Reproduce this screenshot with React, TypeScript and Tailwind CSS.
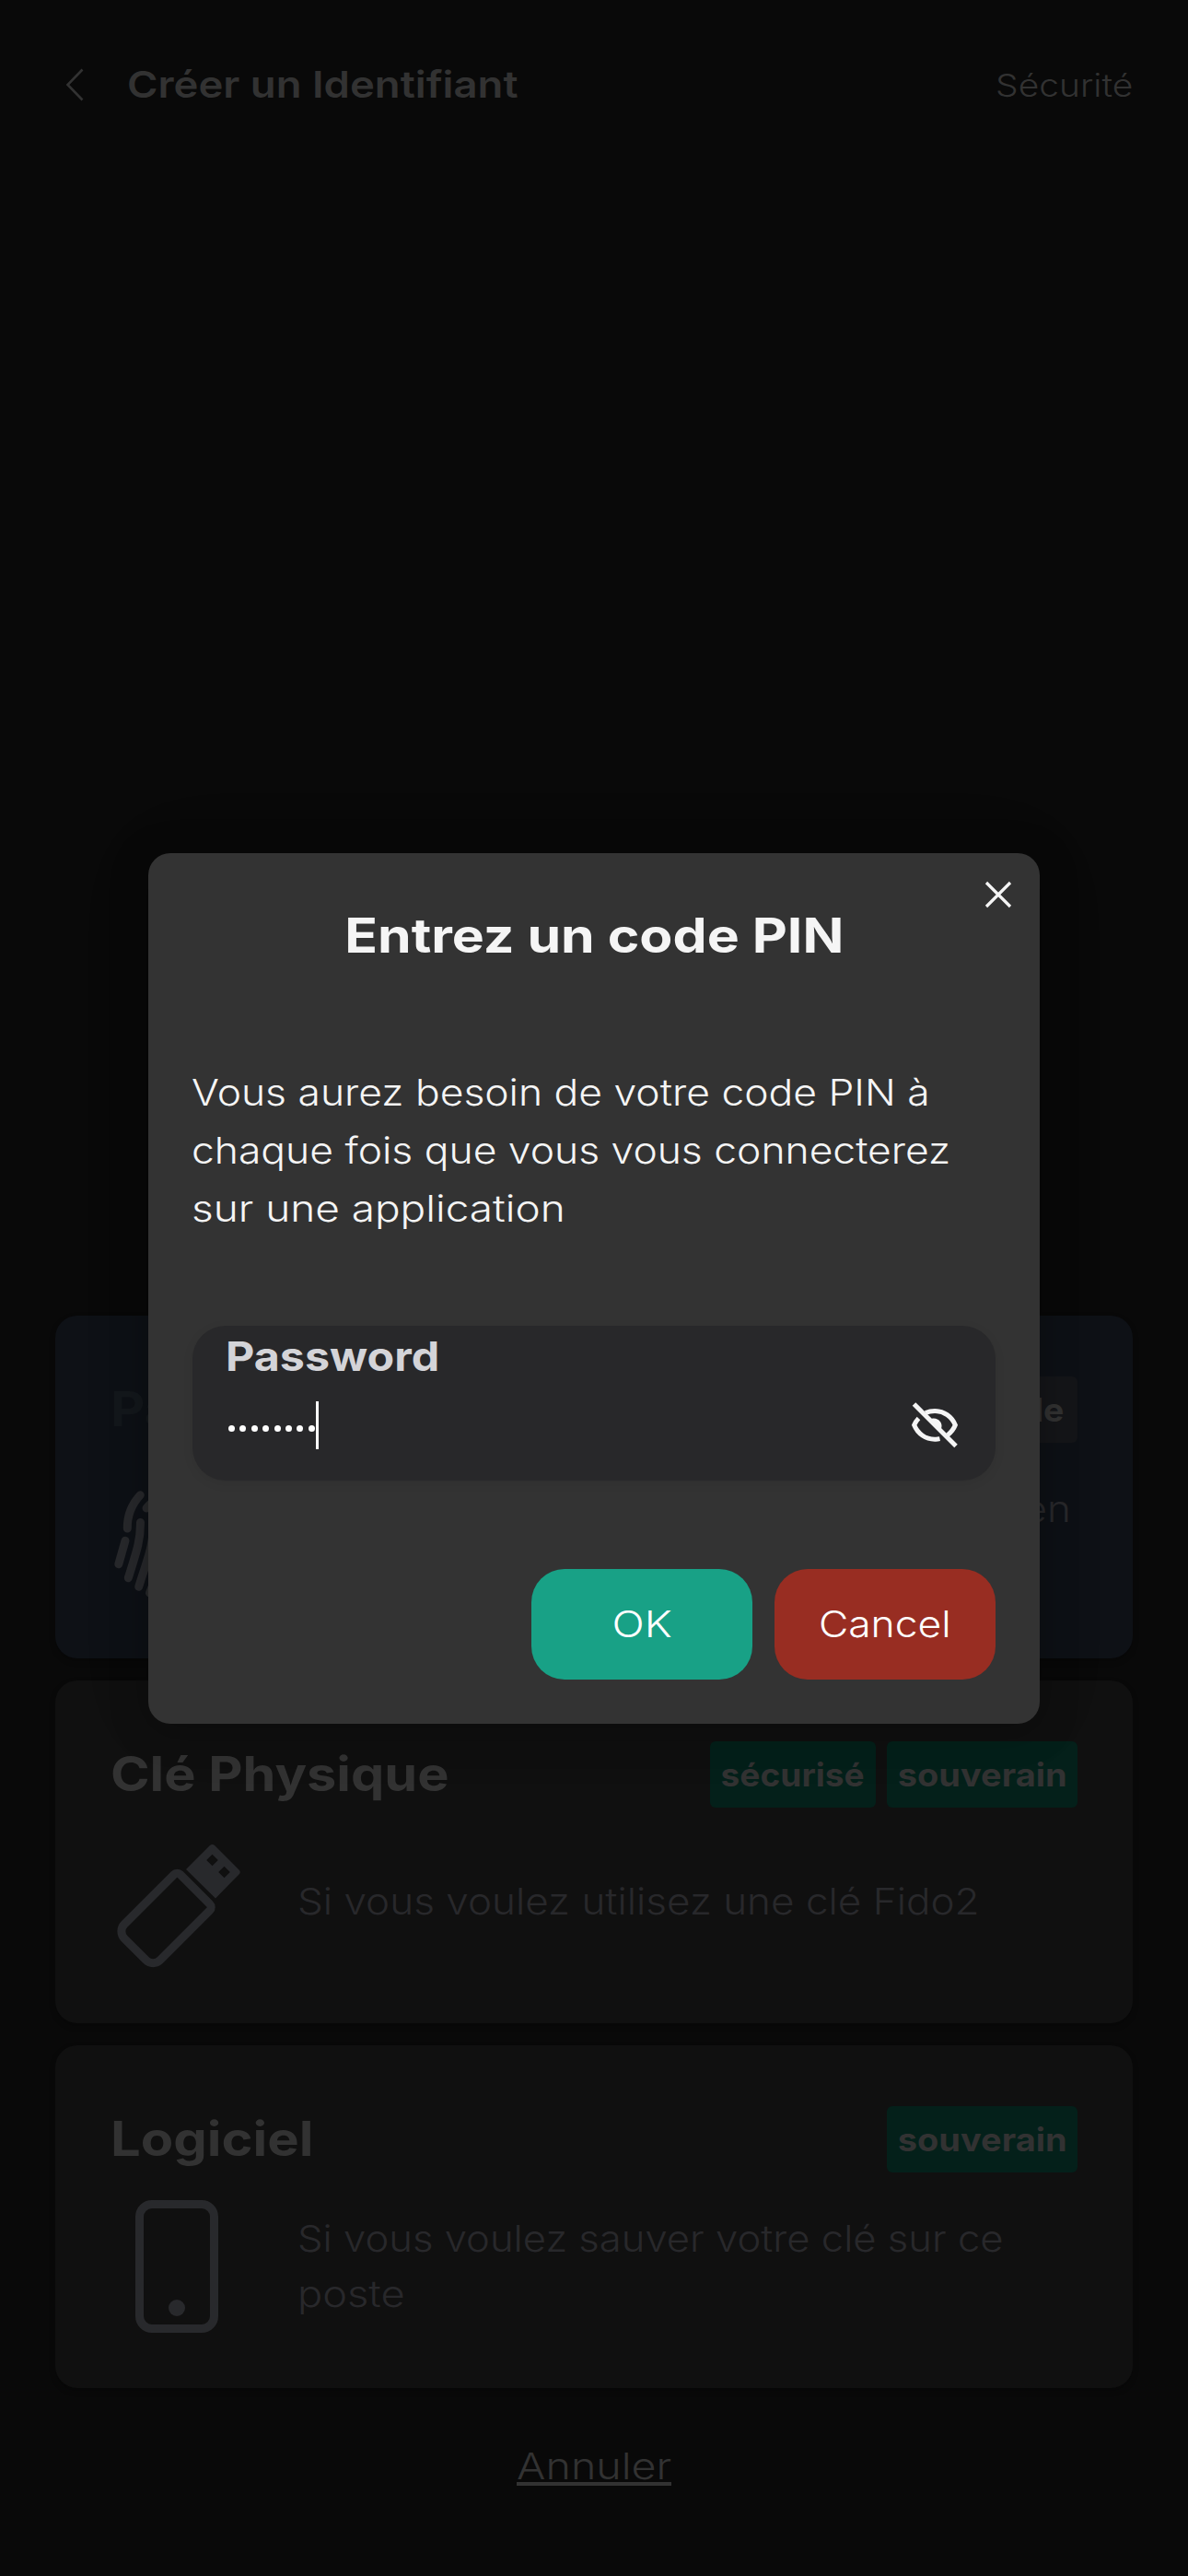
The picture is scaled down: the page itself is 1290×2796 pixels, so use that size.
import type { ReactNode } from 'react';

function ChevronIcon() {
  return (
    <svg className="h-9 w-[22px]" viewBox="0 0 22 36" fill="none" stroke="#323232" strokeWidth="2.6">
      <path d="M18.500 1.500 2.500 18l16 16.500" />
    </svg>
  );
}

function CloseIcon() {
  return (
    <svg className="h-[30px] w-[30px]" viewBox="0 0 30 30" stroke="#f5f5f5" strokeWidth="3.2">
      <path d="M2 2l26 26M28 2 2 28" />
    </svg>
  );
}

function EyeOffIcon() {
  return (
    <svg className="h-[54px] w-[54px]" viewBox="28 30 54 54" fill="none" stroke="#f5f5f5" strokeWidth="5">
      <path d="M45 43.6C48 42.2 51.4 41.5 55 41.5c10 0 18.500 6 22.300 15.300-1.600 4-4.200 7.600-8.300 10.800" />
      <path d="M37.500 49.500c-2.100 2.100-3.700 4.600-4.800 7.300C36.500 66.100 45 72.200 55 72.200c2 0 3.600-.2 5.500-.6" />
      <path d="M32.500 33.900 78 79.600" />
      <path d="M49 51.200c4-2.800 8.500-1.600 11.200 1 2.900 2.900 3 7.400.6 10.900z" fill="#f5f5f5" stroke="none" />
    </svg>
  );
}

function FingerprintIcon() {
  return (
    <svg className="h-36 w-36" viewBox="120 1596 144 144" fill="none" stroke="#28292c" strokeWidth="9" strokeLinecap="round">
      <path d="M152.300 1622.700Q138 1638 138.300 1659" />
      <path d="M136 1672.300 128.800 1697.700" />
      <path d="M152.500 1652.500C152.500 1672 149 1682 139.300 1712.700" />
      <path d="M159 1637C172 1620 198 1618 212 1634 222 1645 222 1664 218 1684" />
      <path d="M150.700 1722.300C158 1698 166 1680 166 1660 168 1630 202 1632 204 1660 204 1684 198 1706 190 1726" />
      <path d="M162.500 1729C172 1704 184 1682 185 1660" />
      <path d="M166 1610C190 1598 222 1606 234 1632" />
    </svg>
  );
}

function UsbKeyIcon() {
  return (
    <svg className="h-36 w-36" viewBox="119.5 1992 144 144">
      <g transform="rotate(45 179 2083)">
        <path
          d="M157 2037.300h44.500a5 5 0 0 1 5 5v76a11 11 0 0 1-11 11h-33a11 11 0 0 1-11-11v-76a5 5 0 0 1 5-5z"
          fill="none"
          stroke="#28292c"
          strokeWidth="9"
        />
      </g>
      <path
        fill="#28292c"
        fillRule="evenodd"
        d="M227.500 2003q2.500-2 5 0l26.500 26.500q2.500 2.500 0 5l-25.500 26-32-31.500zM230 2012.700l-6.300 6.300 6.300 6.300 6.300-6.300zM243 2025.700l-6.300 6.300 6.300 6.300 6.300-6.300z"
      />
    </svg>
  );
}

function PhoneIcon() {
  return (
    <svg className="h-36 w-36" viewBox="0 0 144 144">
      <rect x="31.500" y="4.500" width="81" height="135" rx="13.500" fill="none" stroke="#28292c" strokeWidth="9" />
      <circle cx="72" cy="117" r="9" fill="#28292c" />
    </svg>
  );
}

function Badge({ className, children }: { className: string; children: ReactNode }) {
  return (
    <span className={`flex h-[72px] items-center justify-center rounded-[6px] text-[35px] font-bold text-[#323232] ${className}`}>
      {children}
    </span>
  );
}

function Card({
  className,
  title,
  badges,
  icon,
  children,
}: {
  className: string;
  title: ReactNode;
  badges: ReactNode;
  icon: ReactNode;
  children: ReactNode;
}) {
  return (
    <section className={`h-[372px] rounded-[24px] px-[60px] pt-[66px] shadow-[0_3px_6px_rgba(0,0,0,0.25)] ${className}`}>
      <div className="flex h-[72px] items-center justify-between text-[52px] leading-[72px] font-bold">
        {title}
        <div className="flex gap-3">{badges}</div>
      </div>
      <div className="flex h-[204px] items-center gap-[60px]">
        {icon}
        <div className="-ml-px text-[40px] leading-[60px] font-light whitespace-nowrap text-[#28282b]">{children}</div>
      </div>
    </section>
  );
}

export default function App() {
  return (
    <div className="relative h-[2796px] w-[1290px] overflow-hidden bg-[#090909] font-['Inter',sans-serif]">
      <header className="flex h-[183px] items-center pr-[60px] pl-[71px] text-[#323232]">
        <ChevronIcon />
        <h1 className="ml-[45px] origin-left scale-x-[1.137] text-[40px] font-semibold">Créer un Identifiant</h1>
        <span className="mt-0.5 ml-auto origin-right scale-x-[1.145] text-[34px] font-light">Sécurité</span>
      </header>

      <main className="flex flex-col gap-6 px-[60px] pt-[1245px]">
        <Card
          className="bg-[#0e1116]"
          title={<h2 className="origin-left scale-x-[1.11] text-[#14181c]">Passkey</h2>}
          badges={
            <Badge className="w-[150px] bg-[#151619]">
              <span className="scale-x-[1.07]">simple</span>
            </Badge>
          }
          icon={<FingerprintIcon />}
        >
          <p className="w-[840px] origin-right scale-x-[1.1] text-right">Si vous voulez vous connecter en</p>
          <p className="origin-left scale-x-[1.1]">utilisant votre téléphone</p>
        </Card>
        <Card
          className="bg-[#101010]"
          title={<h2 className="origin-left scale-x-[1.108] text-[#323232]">Clé Physique</h2>}
          badges={
            <>
              <Badge className="w-[180px] bg-[#04201a]">
                <span className="scale-x-[1.06]">sécurisé</span>
              </Badge>
              <Badge className="w-[207px] bg-[#04201a]">
                <span className="scale-x-[1.085]">souverain</span>
              </Badge>
            </>
          }
          icon={<UsbKeyIcon />}
        >
          <p className="origin-left scale-x-[1.101]">Si vous voulez utilisez une clé Fido2</p>
        </Card>
        <Card
          className="bg-[#101010]"
          title={<h2 className="origin-left scale-x-[1.113] text-[#323232]">Logiciel</h2>}
          badges={
            <Badge className="w-[207px] bg-[#04201a]">
              <span className="scale-x-[1.085]">souverain</span>
            </Badge>
          }
          icon={<PhoneIcon />}
        >
          <p className="origin-left scale-x-[1.09]">Si vous voulez sauver votre clé sur ce</p>
          <p className="origin-left scale-x-[1.13]">poste</p>
        </Card>
      </main>

      <div className="mt-[54px] flex justify-center text-[#323232]">
        <a className="h-[52px] w-[168px] border-b-4 border-[#323232] text-center text-[40px] leading-[62px] font-light whitespace-nowrap">
          <span className="inline-block scale-x-[1.165]">Annuler</span>
        </a>
      </div>

      <div className="absolute inset-0 flex items-start justify-center pt-[926px]">
        <div
          role="dialog"
          className="relative h-[945px] w-[968px] rounded-[24px] bg-[#333333] p-12 text-[#f5f5f5] shadow-[0_0_90px_rgba(0,0,0,0.06),0_6px_42px_rgba(0,0,0,0.25)]"
        >
          <button className="absolute top-[30px] right-[30px]" aria-label="Close">
            <CloseIcon />
          </button>
          <h2 className="flex h-[84px] items-center justify-center text-[52px] font-bold">
            <span className="scale-x-[1.133]">Entrez un code PIN</span>
          </h2>
          <div className="mt-24 -ml-px text-[40px] leading-[63px] font-light whitespace-nowrap">
            <p className="origin-left scale-x-[1.11]">Vous aurez besoin de votre code PIN à</p>
            <p className="origin-left scale-x-[1.11]">chaque fois que vous vous connecterez</p>
            <p className="origin-left scale-x-[1.148]">sur une application</p>
          </div>
          <div className="mt-24 h-[168px] rounded-[36px] bg-[#28282a] px-9 shadow-[0_3px_12px_rgba(0,0,0,0.08)]">
            <div className="h-[66px] origin-left scale-x-[1.1] text-[44px] leading-[66px] font-bold text-[#d4d4d8]">Password</div>
            <div className="flex h-[84px] items-center justify-between">
              <div className="flex h-[52px] items-center">
                <div className="flex gap-[5.4px] pt-[7px] pl-[3px]">
                  {Array.from({ length: 8 }, (_, i) => (
                    <span key={i} className="h-[7px] w-[7px] rounded-full bg-white" />
                  ))}
                </div>
                <span className="ml-px h-[52px] w-[3px] bg-white" />
              </div>
              <div className="mr-[3px]">
                <EyeOffIcon />
              </div>
            </div>
          </div>
          <div className="mt-24 flex justify-end gap-6 text-[40px] font-light text-white">
            <button className="h-[120px] w-60 rounded-[36px] bg-[#18a186]">
              <span className="inline-block scale-x-[1.16]">OK</span>
            </button>
            <button className="h-[120px] w-60 rounded-[36px] bg-[#982d22]">
              <span className="inline-block scale-x-[1.11]">Cancel</span>
            </button>
          </div>
        </div>
      </div>
    </div>
  );
}
